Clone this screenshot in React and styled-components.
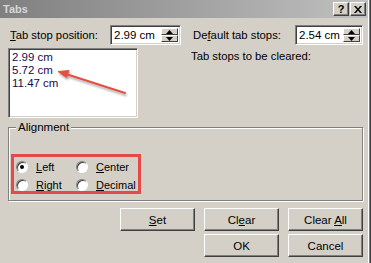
import styled, { createGlobalStyle } from 'styled-components'

const GlobalStyle = createGlobalStyle`
    body {
        margin: 0;
        background: #d4d0c8;
        font-family: "Liberation Sans", Arial, sans-serif;
        font-size: 11px;
        color: #000;
    }
`

function App() {
    return (
        <>
            <GlobalStyle />
            <Window>
                <TitleBar>
                    <Title>Tabs</Title>
                    <TitleButtons>
                        <CaptionButton>?</CaptionButton>
                        <CaptionButton>
                            <svg width="8" height="7" viewBox="0 0 8 7">
                                <path d="M0 0h2l2 2.4L6 0h2L5 3.5 8 7H6L4 4.6 2 7H0l3-3.5z" fill="#000" />
                            </svg>
                        </CaptionButton>
                    </TitleButtons>
                </TitleBar>
                <Content>
                    <TopGrid>
                        <Column>
                            <FieldRow>
                                <Label><u>T</u>ab stop position:</Label>
                                <SpinBox value="2.99 cm" width={71} />
                            </FieldRow>
                            <ListWrap>
                                <ListBox>
                                    <ListItem>2.99 cm</ListItem>
                                    <ListItem>5.72 cm</ListItem>
                                    <ListItem>11.47 cm</ListItem>
                                </ListBox>
                                <Arrow />
                            </ListWrap>
                        </Column>
                        <Column>
                            <FieldRow>
                                <Label>De<u>f</u>ault tab stops:</Label>
                                <SpinBox value="2.54 cm" width={68} />
                            </FieldRow>
                            <ClearedLabel>Tab stops to be cleared:</ClearedLabel>
                        </Column>
                    </TopGrid>

                    <GroupBox>
                        <Legend>Alignment</Legend>
                        <Highlight>
                            <RadioOption checked label="L" rest="eft" />
                            <RadioOption label="C" rest="enter" />
                            <RadioOption label="R" rest="ight" />
                            <RadioOption label="D" rest="ecimal" />
                        </Highlight>
                    </GroupBox>

                    <ButtonGrid>
                        <Button><span><u>S</u>et</span></Button>
                        <Button><span>Cl<u>e</u>ar</span></Button>
                        <Button><span>Clear <u>A</u>ll</span></Button>
                        <Button $col={2}><span>OK</span></Button>
                        <Button $col={3}><span>Cancel</span></Button>
                    </ButtonGrid>
                </Content>
            </Window>
        </>
    )
}

function SpinBox({ value, width }) {
    return (
        <SpinFrame $width={width}>
            <SpinText>{value}</SpinText>
            <SpinButtons>
                <SpinButton>
                    <svg width="7" height="4" viewBox="0 0 7 4"><path d="M3.5 0L7 4H0z" fill="#000" /></svg>
                </SpinButton>
                <SpinButton>
                    <svg width="7" height="4" viewBox="0 0 7 4"><path d="M0 0h7L3.5 4z" fill="#000" /></svg>
                </SpinButton>
            </SpinButtons>
        </SpinFrame>
    )
}

function RadioOption({ checked, label, rest }) {
    return (
        <Option>
            <RadioCircle>{checked && <RadioDot />}</RadioCircle>
            <span><u>{label}</u>{rest}</span>
        </Option>
    )
}

function Arrow() {
    return (
        <ArrowSvg width="80" height="36" viewBox="0 0 80 36">
            <defs>
                <filter id="sh" x="-20%" y="-50%" width="140%" height="200%">
                    <feDropShadow dx="1" dy="2" stdDeviation="1.2" floodColor="#000" floodOpacity="0.35" />
                </filter>
            </defs>
            <g filter="url(#sh)" fill="#e2503f" stroke="#e2503f">
                <line x1="73" y1="28" x2="14" y2="9" strokeWidth="2" strokeLinecap="round" />
                <path d="M6 6.5L17 5.5 14.5 12.5z" strokeWidth="1" strokeLinejoin="round" />
            </g>
        </ArrowSvg>
    )
}

const Window = styled.div`
    width: 368px;
    height: 263px;
    border-right: 1px solid #fff;
    box-shadow: 1px 0 0 #808080, 2px 0 0 #404040;
    display: flex;
    flex-direction: column;
    background: #d4d0c8;
`

const TitleBar = styled.div`
    height: 18px;
    display: flex;
    align-items: center;
    justify-content: space-between;
    padding: 0 2px 0 3px;
    background: linear-gradient(to right, #808080, #c0c0c0);
`

const Title = styled.div`
    font-weight: bold;
    font-size: 11px;
    color: #d8d8d8;
`

const TitleButtons = styled.div`
    display: flex;
    gap: 1px;
`

const CaptionButton = styled.div`
    width: 16px;
    height: 14px;
    box-sizing: border-box;
    background: #d4d0c8;
    border: 1px solid;
    border-color: #fff #404040 #404040 #fff;
    box-shadow: inset -1px -1px 0 #808080;
    display: flex;
    align-items: center;
    justify-content: center;
    font-weight: bold;
    font-size: 11px;
    line-height: 1;
`

const Content = styled.div`
    flex: 1;
    display: flex;
    flex-direction: column;
    padding: 7px 5px 0 8px;
`

const TopGrid = styled.div`
    display: grid;
    grid-template-columns: 173px 172px;
    column-gap: 10px;
`

const Column = styled.div`
    display: flex;
    flex-direction: column;
`

const FieldRow = styled.div`
    display: flex;
    align-items: center;
    justify-content: space-between;
    height: 20px;
`

const Label = styled.span`
    padding-left: 2px;
    font-size: 11.3px;
`

const ClearedLabel = styled.div`
    margin-top: 5px;
    line-height: 13px;
    font-size: 11.3px;
`

const SpinFrame = styled.div`
    width: ${p => p.$width}px;
    height: 20px;
    box-sizing: border-box;
    border: 1px solid;
    border-color: #808080 #fff #fff #808080;
    box-shadow: inset 1px 1px 0 #404040, inset -1px -1px 0 #d4d0c8;
    background: #fff;
    display: flex;
    align-items: center;
    justify-content: space-between;
    padding: 2px 2px 2px 3px;
`

const SpinText = styled.span`
    font-size: 11.5px;
`

const SpinButtons = styled.div`
    display: flex;
    flex-direction: column;
    height: 14px;
`

const SpinButton = styled.div`
    width: 17px;
    height: 7px;
    box-sizing: border-box;
    background: #d4d0c8;
    border: 1px solid;
    border-color: #fff #404040 #404040 #fff;
    display: flex;
    align-items: center;
    justify-content: center;
`

const ListWrap = styled.div`
    position: relative;
    margin-top: 3px;
`

const ListBox = styled.div`
    width: 130px;
    height: 70px;
    box-sizing: border-box;
    border: 1px solid;
    border-color: #808080 #fff #fff #808080;
    box-shadow: inset 1px 1px 0 #404040, inset -1px -1px 0 #d4d0c8;
    background: #fff;
    padding: 2px 3px;
`

const ListItem = styled.div`
    line-height: 13px;
    font-size: 11.5px;
    color: #1a0a50;
`

const ArrowSvg = styled.svg`
    position: absolute;
    left: 44px;
    top: 17px;
    overflow: visible;
`

const GroupBox = styled.fieldset`
    margin: 3px 0 0 0;
    width: 355px;
    height: 80px;
    box-sizing: border-box;
    border: 1px solid #808080;
    box-shadow: 1px 1px 0 #fff, inset 1px 1px 0 #fff;
    padding: 20px 0 0 2px;
`

const Legend = styled.legend`
    padding: 0 2px;
    margin-left: 5px;
    line-height: 13px;
    font-size: 11.5px;
    background: #d4d0c8;
`

const Highlight = styled.div`
    width: 130px;
    height: 40px;
    box-sizing: border-box;
    border: 3px solid #e34b48;
    display: grid;
    grid-template-columns: 60px 1fr;
    grid-auto-rows: 18px;
    padding: 1px 0 0 2px;
`

const Option = styled.label`
    display: flex;
    align-items: center;
    gap: 8px;
    font-size: 11px;
`

const RadioCircle = styled.span`
    width: 12px;
    height: 12px;
    box-sizing: border-box;
    border-radius: 50%;
    background: #fff;
    border: 1px solid;
    border-color: #808080 #fff #fff #808080;
    box-shadow: inset 1px 1px 0 #404040;
    display: flex;
    align-items: center;
    justify-content: center;
`

const RadioDot = styled.span`
    width: 4px;
    height: 4px;
    border-radius: 50%;
    background: #000;
`

const ButtonGrid = styled.div`
    margin-top: 7px;
    align-self: flex-start;
    margin-left: 112px;
    display: grid;
    grid-template-columns: repeat(3, 75px);
    grid-auto-rows: 23px;
    column-gap: 9px;
    row-gap: 3px;
`

const Button = styled.div`
    grid-column: ${p => p.$col || 'auto'};
    box-sizing: border-box;
    background: #d4d0c8;
    border: 1px solid;
    border-color: #fff #404040 #404040 #fff;
    box-shadow: inset -1px -1px 0 #808080;
    display: flex;
    align-items: center;
    justify-content: center;
    font-size: 11.5px;
`

export default App
